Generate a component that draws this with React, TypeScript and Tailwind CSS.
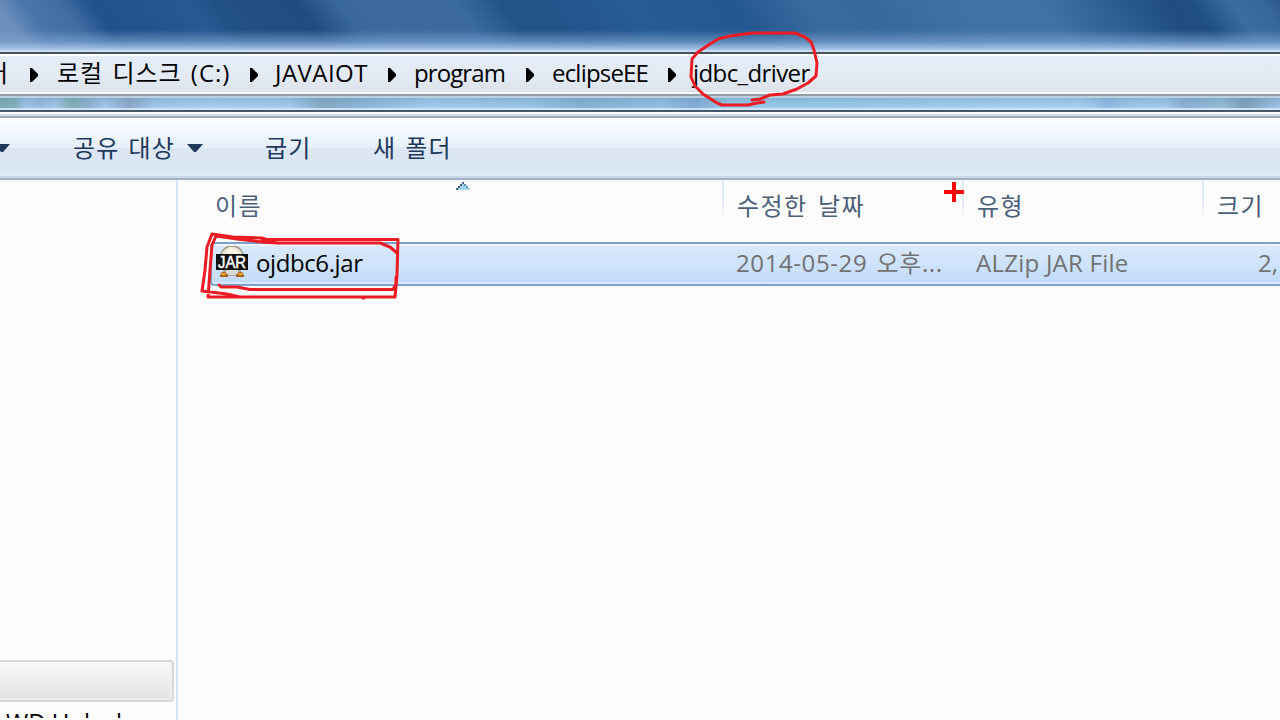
import React from "react";

const CRUMB = "block whitespace-nowrap leading-[36px] text-black -mt-[2px]";
const TOOL = "block whitespace-nowrap leading-[36px] text-[#1e395b] mt-[5px] tracking-[1.2px] [word-spacing:1.5px]";
const HEAD = "shrink-0 pt-[8px] leading-[36px] tracking-[1.4px] [word-spacing:3px]";

function Chevron() {
  return (
    <svg className="mt-[2px] shrink-0" width="8" height="14" viewBox="0 0 8 14">
      <path d="M0 0h2l6 6v2L2 14H0z" fill="#000" />
    </svg>
  );
}

function DropArrow({ className }: { className: string }) {
  return (
    <svg className={`shrink-0 ${className}`} width="16" height="8" viewBox="0 0 16 8">
      <path d="M0 0h16L9 8H7z" fill="#1e395b" />
    </svg>
  );
}

function Cell({ className, children }: { className: string; children: React.ReactNode }) {
  return <div className={`flex shrink-0 ${className}`}>{children}</div>;
}

function JarIcon() {
  return (
    <svg className="-mt-[4px] block shrink-0" width="32" height="32" viewBox="0 0 32 32">
      <defs>
        <radialGradient id="ball" cx="0.5" cy="0.35" r="0.6">
          <stop offset="0.35" stopColor="#f8f4e6" />
          <stop offset="1" stopColor="#cfc7aa" />
        </radialGradient>
      </defs>
      <ellipse cx="16" cy="11" rx="11.5" ry="11" fill="url(#ball)" stroke="#a29c86" strokeWidth="1.5" />
      <path d="M7 22h18v4l-3 4H10l-3-4z" fill="#a9a9a4" />
      <path d="M10 22h12v5l-3 2h-6l-3-2z" fill="#dcdcd8" />
      <path d="M6 26h3l3 3v2H4v-2zM26 26h-3l-3 3v2h8v-2z" fill="#a8641a" />
      <path d="M6 27h3l1 2H5zM26 27h-3l-1 2h5z" fill="#f5ab32" />
      <rect y="8" width="32" height="16" fill="#111" />
      <text x="2" y="22" textLength="28" lengthAdjust="spacingAndGlyphs" fill="#fff" stroke="#fff" strokeWidth="0.5" className="font-['Liberation_Sans'] text-[17px]">JAR</text>
    </svg>
  );
}

function Separator() {
  return <div className="h-[40px] w-[2px] shrink-0 bg-linear-to-b from-[#dce9f7] from-50% to-[#fcfcfc]" />;
}

export default function App() {
  return (
    <div className="relative flex h-[720px] w-[1280px] flex-col overflow-hidden bg-[#fcfcfc] font-['Open_Sans','Noto_Sans_CJK_KR',sans-serif] text-[24px]">
      {/* Glass title area */}
      <div className="relative h-[50px] shrink-0 overflow-hidden bg-[#3b699f]">
        <div className="-ml-[60px] h-[50px] w-[1400px] origin-top skew-x-[35deg] bg-[linear-gradient(90deg,#6b8fbd_0px,#6b8fbd_55px,#4b76aa_80px,#3f6da3_120px,#22518b_150px,#25568f_220px,#285a95_245px,#215083_275px,#204d80_355px,#386799_396px,#3d6a9f_430px,#3b6aa1_515px,#245387_560px,#235389_600px,#265b94_680px,#245890_790px,#376a9e_860px,#366a9f_930px,#4072a5_1020px,#4272a3_1100px,#2f6096_1160px,#1f4d80_1225px,#204f82_1250px,#3c6ca1_1290px,#37679b_1320px,#295489_1350px)]" />
        <div className="absolute inset-x-0 bottom-0 h-[20px] bg-linear-to-b from-transparent via-[#81a5d1]/65 via-60% to-[#a8c7ed]" />
      </div>
      <div className="h-[2px] shrink-0 bg-[#c8dcf3]" />
      <div className="h-[2px] shrink-0 bg-[#4b5158]" />
      <div className="h-[2px] shrink-0 bg-[#fbfdff]" />

      {/* Address bar */}
      <div className="flex h-[36px] shrink-0 items-center bg-linear-to-b from-[#e5edf8] via-[#e3eaf4] via-60% to-[#dce3ea]">
        <Cell className="-ml-[14px] w-[44px]"><span className={CRUMB}>터</span></Cell>
        <Chevron />
        <Cell className="ml-[19px] w-[193px]"><span className={`${CRUMB} tracking-[1px] [word-spacing:2px]`}>로컬 디스크 (C:)</span></Cell>
        <Chevron />
        <Cell className="ml-[17px] w-[113px]"><span className={`${CRUMB} tracking-[0.45px]`}>JAVAIOT</span></Cell>
        <Chevron />
        <Cell className="ml-[18px] w-[112px]"><span className={`${CRUMB} tracking-[-0.9px]`}>program</span></Cell>
        <Chevron />
        <Cell className="ml-[18px] w-[116px]"><span className={`${CRUMB} tracking-[-0.8px]`}>eclipseEE</span></Cell>
        <Chevron />
        <Cell className="ml-[17px] w-[130px]"><span className={`${CRUMB} tracking-[-0.6px]`}>jdbc_driver</span></Cell>
      </div>
      <div className="h-[2px] shrink-0 bg-[#f8fbfd]" />
      <div className="h-[2px] shrink-0 bg-[#929da6]" />
      <div className="h-[2px] shrink-0 bg-[#bacfdf]" />
      <div className="relative h-[10px] shrink-0 bg-[linear-gradient(90deg,#7caeb4_0px,#83b0ba_15px,#a0c7ee_25px,#99bce2_40px,#a5c8ed_55px,#82b1b7_72px,#94b4d7_90px,#a7cbee_105px,#8fa9cc_130px,#a3cbed_155px,#a9d2f6_210px,#a4cdf0_290px,#83abc8_325px,#8eb8d9_360px,#a4cff4_430px,#9bc8eb_530px,#86b4d5_580px,#94c3e8_660px,#84add8_695px,#99cced_730px,#9ccced_850px,#a7d3f5_1000px,#a9d4f7_1080px,#94bde7_1110px,#a1cced_1135px,#a5cef0_1165px,#8cb2d8_1185px,#96c0d9_1220px,#7fa1be_1245px,#a0c6e9_1280px)]">
        <div className="h-full bg-linear-to-b from-[#648ba5]/35 to-transparent" />
      </div>
      <div className="h-[2px] shrink-0 bg-[#cfe2f3]" />
      <div className="h-[2px] shrink-0 bg-[#45576a]" />

      {/* Toolbar */}
      <div className="h-[2px] shrink-0 bg-[#f9fbff]" />
      <div className="h-[2px] shrink-0 bg-[#d5deee]" />
      <div className="h-[2px] shrink-0 bg-[#a6a8ba]" />
      <div className="flex h-[56px] shrink-0 items-center bg-[linear-gradient(180deg,#ffffff_0px,#f5faff_10px,#e5effa_30px,#dce6f4_30px,#dce7f5_56px)] pb-[1px]">
        <DropArrow className="-ml-[6px] mt-[5px]" />
        <Cell className="ml-[63px] w-[115px]"><span className={TOOL}>공유 대상</span></Cell>
        <DropArrow className="-ml-[1px] mt-[5px]" />
        <Cell className="ml-[62px] w-[108px]"><span className={TOOL}>굽기</span></Cell>
        <span className={TOOL}>새 폴더</span>
      </div>
      <div className="h-[2px] shrink-0 bg-[#e1ecfa]" />
      <div className="h-[2px] shrink-0 bg-[#cbd8e8]" />
      <div className="h-[2px] shrink-0 bg-[#a0aec6]" />

      <div className="flex h-[540px] shrink-0">
        {/* Navigation pane */}
        <div className="flex w-[178px] shrink-0 flex-col border-r-2 border-[#d6e5f5] pt-[480px]">
          <div className="h-[42px] w-[174px] shrink-0 rounded-r-[4px] border-2 border-l-0 border-[#d8d8d8] bg-linear-to-b from-[#f8faf9] to-[#e2e2e2] shadow-[inset_-2px_-2px_0_#eeeeee]" />
          <div className="h-[16px] overflow-hidden pl-[6px] pt-[2px]">
            <span className="block whitespace-nowrap leading-[36px] text-black">WD Unlock</span>
          </div>
        </div>

        {/* File list */}
        <div className="flex w-[1102px] flex-col">
          <div className="relative flex h-[62px] shrink-0 text-[#4c607a]">
            <div className={`${HEAD} w-[544px] pl-[37px]`}>이름</div>
            <Separator />
            <div className={`${HEAD} w-[238px] pl-[13px]`}>수정한 날짜</div>
            <Separator />
            <div className={`${HEAD} w-[238px] pl-[13px]`}>유형</div>
            <Separator />
            <div className={`${HEAD} pl-[13px]`}>크기</div>
            <svg className="absolute left-[278px] top-[2px]" width="14" height="8" viewBox="0 0 14 8">
              <path d="M6 0h2v2h2v2h2v2h2v2H0V6h2V4h2V2h2z" fill="#a5d3ea" />
              <path d="M6 0h2v2H6v2H4v2H2v2H0V6h2V4h2V2h2z" fill="#3d6480" />
              <path d="M8 2h2v2h2v2h-2V4H8z" fill="#5e91ae" />
            </svg>
          </div>
          <div className="ml-[32px] flex h-[44px] shrink-0 items-center rounded-l-[4px] border-2 border-r-0 border-[#7da2ce] bg-linear-to-b from-[#dceafc] to-[#c1dbfb] leading-[36px] text-[#727272] shadow-[inset_0_2px_0_#ebf4fe,inset_0_-2px_0_#d9e9fd]">
            <div className="ml-[4px] flex w-[520px] shrink-0 items-center gap-[8px]">
              <JarIcon />
              <span className="-mt-[2px] tracking-[-0.4px] text-black">ojdbc6.jar</span>
            </div>
            <Cell className="-mt-[2px] w-[240px]"><span className="whitespace-nowrap tracking-[0.6px] [word-spacing:2.5px]">2014-05-29 오후...</span></Cell>
            <Cell className="-mt-[2px] w-[282px]"><span className="whitespace-nowrap tracking-[0.25px]">ALZip JAR File</span></Cell>
            <span className="-mt-[2px]">2,</span>
          </div>
        </div>
      </div>

      {/* Pen annotations and cross cursor */}
      <svg className="pointer-events-none absolute inset-0" width="1280" height="720" viewBox="0 0 1280 720" fill="none" stroke="#ed1c24" strokeWidth="3" strokeLinecap="round" strokeLinejoin="round">
        <path d="M752 100L760 99L770 95L783 94L797 89L808 83L816 76L817 63L814 50L811 42L805 37L795 33H752L730 36L718 39L707 46L698 52L692 59L691 77L695 86L703 94L717 103L722 105H748L757 103L764 102" />
        <path d="M212 234L233 237L262 238L277 243H380L390 247L397 253M262 239.500H398L397 275L395 297H208L210 270L212 245L216 236L237 239L262 242L277 243M212 234L207 247L205 270L202 291L227 294L240 297M219 285L221 287L237 287L250 289.500H393L396 284V277M363 298H364" />
        <path d="M944 192h20M954 182v20" stroke="#ff0000" strokeWidth="4" strokeLinecap="butt" />
      </svg>
    </div>
  );
}
